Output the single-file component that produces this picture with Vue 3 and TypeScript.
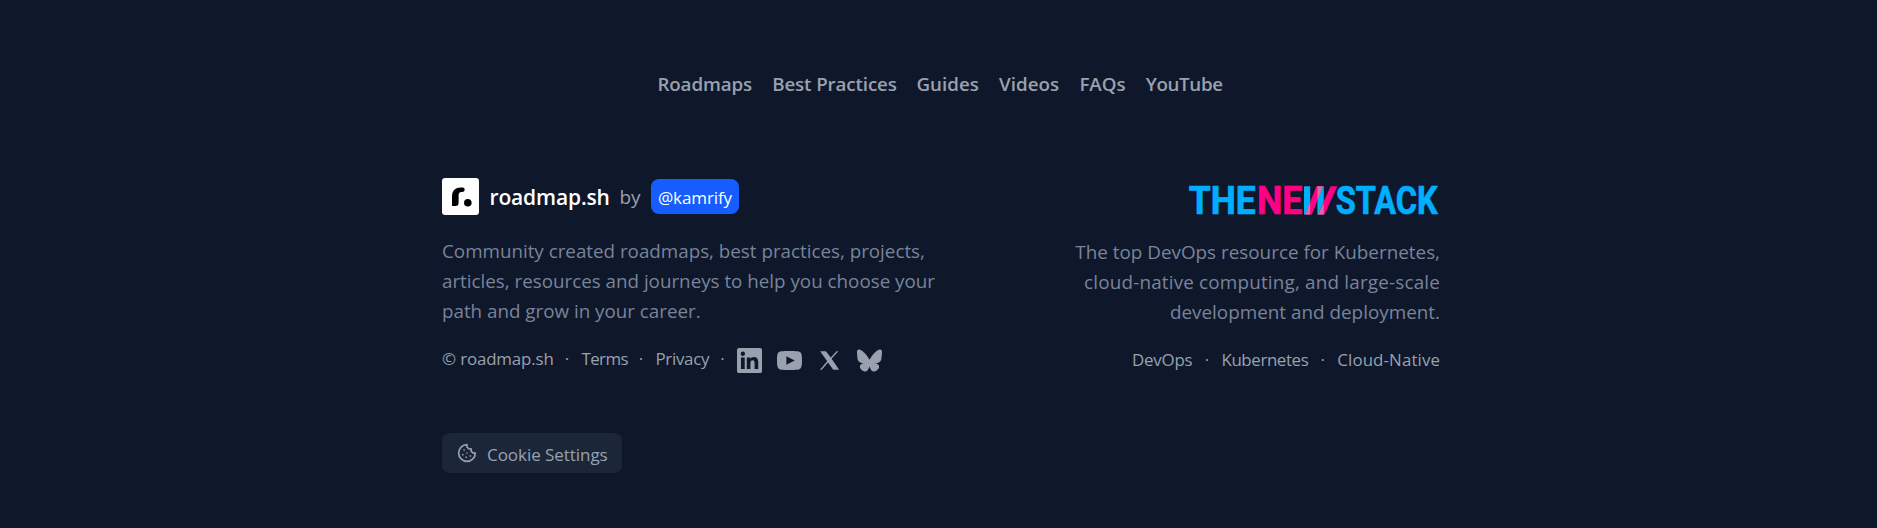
<script setup lang="ts">
interface FooterLink {
  label: string
  slug: string
}

const navLinks: FooterLink[] = [
  { label: 'Roadmaps', slug: 'roadmaps' },
  { label: 'Best Practices', slug: 'practices' },
  { label: 'Guides', slug: 'guides' },
  { label: 'Videos', slug: 'videos' },
  { label: 'FAQs', slug: 'faqs' },
  { label: 'YouTube', slug: 'youtube' },
]

const legalLinks: FooterLink[] = [
  { label: '© roadmap.sh', slug: 'copyright' },
  { label: 'Terms', slug: 'terms' },
  { label: 'Privacy', slug: 'privacy' },
]

const topicLinks: FooterLink[] = [
  { label: 'DevOps', slug: 'devops' },
  { label: 'Kubernetes', slug: 'kubernetes' },
  { label: 'Cloud-Native', slug: 'cloud' },
]
</script>

<template>
  <footer class="footer">
    <div class="container">
      <nav class="nav">
        <a v-for="link in navLinks" :key="link.slug" :class="['nav-link', link.slug]">{{ link.label }}</a>
      </nav>

      <div class="columns">
        <section class="about">
          <div class="brand">
            <svg class="brand-logo" viewBox="0 0 37 37">
              <rect width="37" height="37" rx="3.2" fill="#fff" />
              <path d="M10 28V18.2C10 12.2 13.6 9.4 18.5 9.4H20.6Q22.7 9.4 22.7 11.5Q22.7 13.7 20.6 13.9L19.2 14.1Q16.6 14.4 16.6 17.2V25Q16.6 28 13.6 28Z" fill="#000" />
              <circle cx="25.8" cy="24.8" r="3.8" fill="#000" />
            </svg>
            <span class="brand-name">roadmap.sh</span>
            <span class="by">by</span>
            <a class="author">@kamrify</a>
          </div>
          <p class="text">
            Community created roadmaps, best practices, projects,<br />
            articles, resources and journeys to help you choose your<br />
            path and grow in your career.
          </p>
          <div class="links">
            <template v-for="link in legalLinks" :key="link.slug">
              <a :class="['link', link.slug]">{{ link.label }}</a>
              <span class="dot">·</span>
            </template>
            <span class="socials">
              <svg viewBox="0 0 24 24" fill="currentColor">
                <path fill-rule="evenodd" d="M1.8 0H22.2Q24 0 24 1.8V22.2Q24 24 22.2 24H1.8Q0 24 0 22.2V1.8Q0 0 1.8 0ZM3.8 9V20.2H7.4V9ZM5.6 3.4A2.1 2.1 0 1 0 5.6 7.6A2.1 2.1 0 1 0 5.6 3.4ZM9.4 9V20.2H12.9V14.6C12.9 12.7 13.6 11.8 15 11.8C16.4 11.8 16.9 12.9 16.9 14.6V20.2H20.4V13.8C20.4 10.5 19 8.7 16.2 8.7C14.4 8.7 13.3 9.6 12.8 10.5V9Z" />
              </svg>
              <svg viewBox="0 0 24 24" fill="currentColor">
                <path fill-rule="evenodd" d="M19.6 3.2C16 2.9 8 2.9 4.4 3.2C.5 3.5 0 5.9 0 12s.5 8.5 4.4 8.8c3.6.3 11.6.3 15.2 0C23.5 20.5 24 18.1 24 12s-.5-8.5-4.4-8.8zM9 16V8l8 4z" />
              </svg>
              <svg viewBox="0 0 24 24" fill="currentColor">
                <path d="M3 3H8.6L13.2 9.1L18.8 3H20.5L14 10.2L21.2 20.9H15.6L10.6 13.9L4.6 20.9H2.8L9.8 12.8Z" />
              </svg>
              <svg viewBox="0 0 24 24" fill="currentColor">
                <path d="M5.2 2.8C8 4.9 10.9 9 12 11.3C13.1 9 16 4.9 18.8 2.8C20.8 1.3 24 .1 24 3.8C24 4.6 23.6 10.2 23.3 11.1C22.4 14.2 19.3 15 16.5 14.5C21.4 15.3 22.6 18 19.9 20.7C14.8 25.9 12.6 19.4 12 17.7C11.4 19.4 9.2 25.9 4.1 20.7C1.4 18 2.6 15.3 7.5 14.5C4.7 15 1.6 14.2.7 11.1C.4 10.2 0 4.6 0 3.8C0 .1 3.2 1.3 5.2 2.8Z" />
              </svg>
            </span>
          </div>
        </section>

        <section class="sponsor">
          <svg class="sponsor-logo" viewBox="0 -10 252 54" role="img" aria-label="The New Stack">
            <g class="wordmark">
              <text class="cyan" x="0.8" y="30.3" textLength="67" lengthAdjust="spacingAndGlyphs">THE</text>
              <text class="pink" x="69" y="30.3" textLength="45.5" lengthAdjust="spacingAndGlyphs">NE</text>
              <text class="cyan" x="147.8" y="30.3" textLength="102" lengthAdjust="spacingAndGlyphs">STACK</text>
            </g>
            <path d="M116 2.2H122.2V30.5H116ZM129.4 2.2H135.8V30.5H129.4Z" fill="#00aeff" />
            <path d="M128.4 2.2H135L123.8 30.5H117.2ZM142.6 2.2H149.3L136.6 30.5H129.9Z" fill="#ff0087" />
            <path d="M122.2 17.9V30.5H117.2ZM135 2.2L129.4 16.4V2.2ZM135.8 18.8V30.5H129.9Z" fill="#d0709d" />
          </svg>
          <p class="text">
            The top DevOps resource for Kubernetes,<br />
            <span class="wide-line">cloud-native computing, and large-scale</span><br />
            development and deployment.
          </p>
          <div class="links">
            <template v-for="(link, index) in topicLinks" :key="link.slug">
              <span v-if="index > 0" class="dot">·</span>
              <a :class="['link', link.slug]">{{ link.label }}</a>
            </template>
          </div>
        </section>
      </div>

      <button class="cookie-button" type="button">
        <svg viewBox="0 0 24 24" fill="none" stroke="currentColor" stroke-width="2" stroke-linecap="round" stroke-linejoin="round">
          <path d="M12 2a10 10 0 1 0 10 10 4 4 0 0 1-5-5 4 4 0 0 1-5-5" />
          <path d="M8.5 8.5v.01M16 15.5v.01M12 12v.01M11 17v.01M7 14v.01" />
        </svg>
        <span>Cookie Settings</span>
      </button>
    </div>
  </footer>
</template>

<style>
body {
  background: #0f172a;
}
</style>

<style scoped>
.footer {
  box-sizing: border-box;
  height: 528px;
  padding: 69px 0 0 442px;
  overflow: hidden;
  background: #0f172a;
  color: #99a1af;
  font-family: "Open Sans", "Noto Sans", sans-serif;
}

.container {
  width: 998px;
}

.nav {
  display: flex;
  gap: 20px;
  height: 30px;
  padding-left: 215.4px;
  font-size: 18.75px;
  font-weight: 600;
  line-height: 30px;
  white-space: nowrap;
}

.nav-link.roadmaps { width: 94.8px; letter-spacing: -0.1px; }
.nav-link.practices { width: 124.3px; letter-spacing: -0.12px; }
.nav-link.guides { width: 62.6px; }
.nav-link.videos { width: 60.3px; }
.nav-link.faqs { width: 46.3px; }
.nav-link.youtube { letter-spacing: -0.35px; }

.columns {
  display: flex;
  justify-content: space-between;
  margin-top: 79px;
}

.brand {
  display: flex;
  align-items: center;
  height: 37px;
}

.brand-logo {
  width: 37px;
  height: 37px;
}

.brand-name {
  width: 121px;
  margin-left: 10.5px;
  color: #fff;
  font-size: 21px;
  font-weight: 600;
  letter-spacing: -0.15px;
  line-height: 30px;
}

.by {
  width: 21.5px;
  margin-left: 9px;
  font-size: 19px;
  line-height: 30px;
}

.author {
  box-sizing: border-box;
  width: 88px;
  height: 35px;
  margin-left: 10px;
  border-radius: 8px;
  background: #155dfc;
  color: #fff;
  font-size: 17px;
  letter-spacing: -0.1px;
  line-height: 37px;
  text-align: center;
}

.text {
  margin: 21px 0 0;
  color: #78849b;
  font-size: 18.8px;
  line-height: 30px;
  white-space: nowrap;
}

.wide-line {
  letter-spacing: 0.18px;
}

.links {
  display: flex;
  align-items: center;
  height: 25px;
  margin-top: 22px;
  font-size: 16.9px;
  line-height: 25px;
  white-space: nowrap;
}

.link,
.dot {
  margin-top: -5px;
}

.dot {
  width: 29px;
  text-align: center;
}

.link.copyright { width: 110.5px; letter-spacing: -0.15px; }
.link.terms { width: 45px; letter-spacing: -0.6px; }
.link.privacy { width: 52.5px; letter-spacing: -0.3px; }
.link.kubernetes { letter-spacing: -0.4px; }
.link.cloud { letter-spacing: 0.1px; }
.link.devops { letter-spacing: -0.2px; }

.socials {
  display: flex;
  gap: 15px;
}

.socials svg {
  width: 25px;
  height: 25px;
}

.sponsor {
  display: flex;
  flex-direction: column;
  align-items: flex-end;
  text-align: right;
}

.sponsor-logo {
  width: 252px;
  height: 54px;
  margin-top: -4px;
}

.wordmark {
  font-family: Roboto, sans-serif;
  font-size: 39px;
  font-weight: 700;
}

.cyan {
  fill: #00aeff;
  stroke: #00aeff;
  stroke-width: 0.7px;
}

.pink {
  fill: #ff0087;
  stroke: #ff0087;
  stroke-width: 0.7px;
}

.sponsor .text {
  margin-top: 9px;
  font-size: 18.87px;
}

.cookie-button {
  display: flex;
  align-items: center;
  box-sizing: border-box;
  width: 180px;
  height: 40px;
  margin-top: 59px;
  padding: 0 0 0 15px;
  border: 0;
  border-radius: 8px;
  background: #1b2739;
  color: #99a1af;
  font: 17px "Open Sans", "Noto Sans", sans-serif;
}

.cookie-button svg {
  width: 20px;
  height: 20px;
  margin: 0 10px 0 0;
}

.cookie-button span {
  padding-top: 3px;
  letter-spacing: -0.05px;
  line-height: 24px;
}
</style>
